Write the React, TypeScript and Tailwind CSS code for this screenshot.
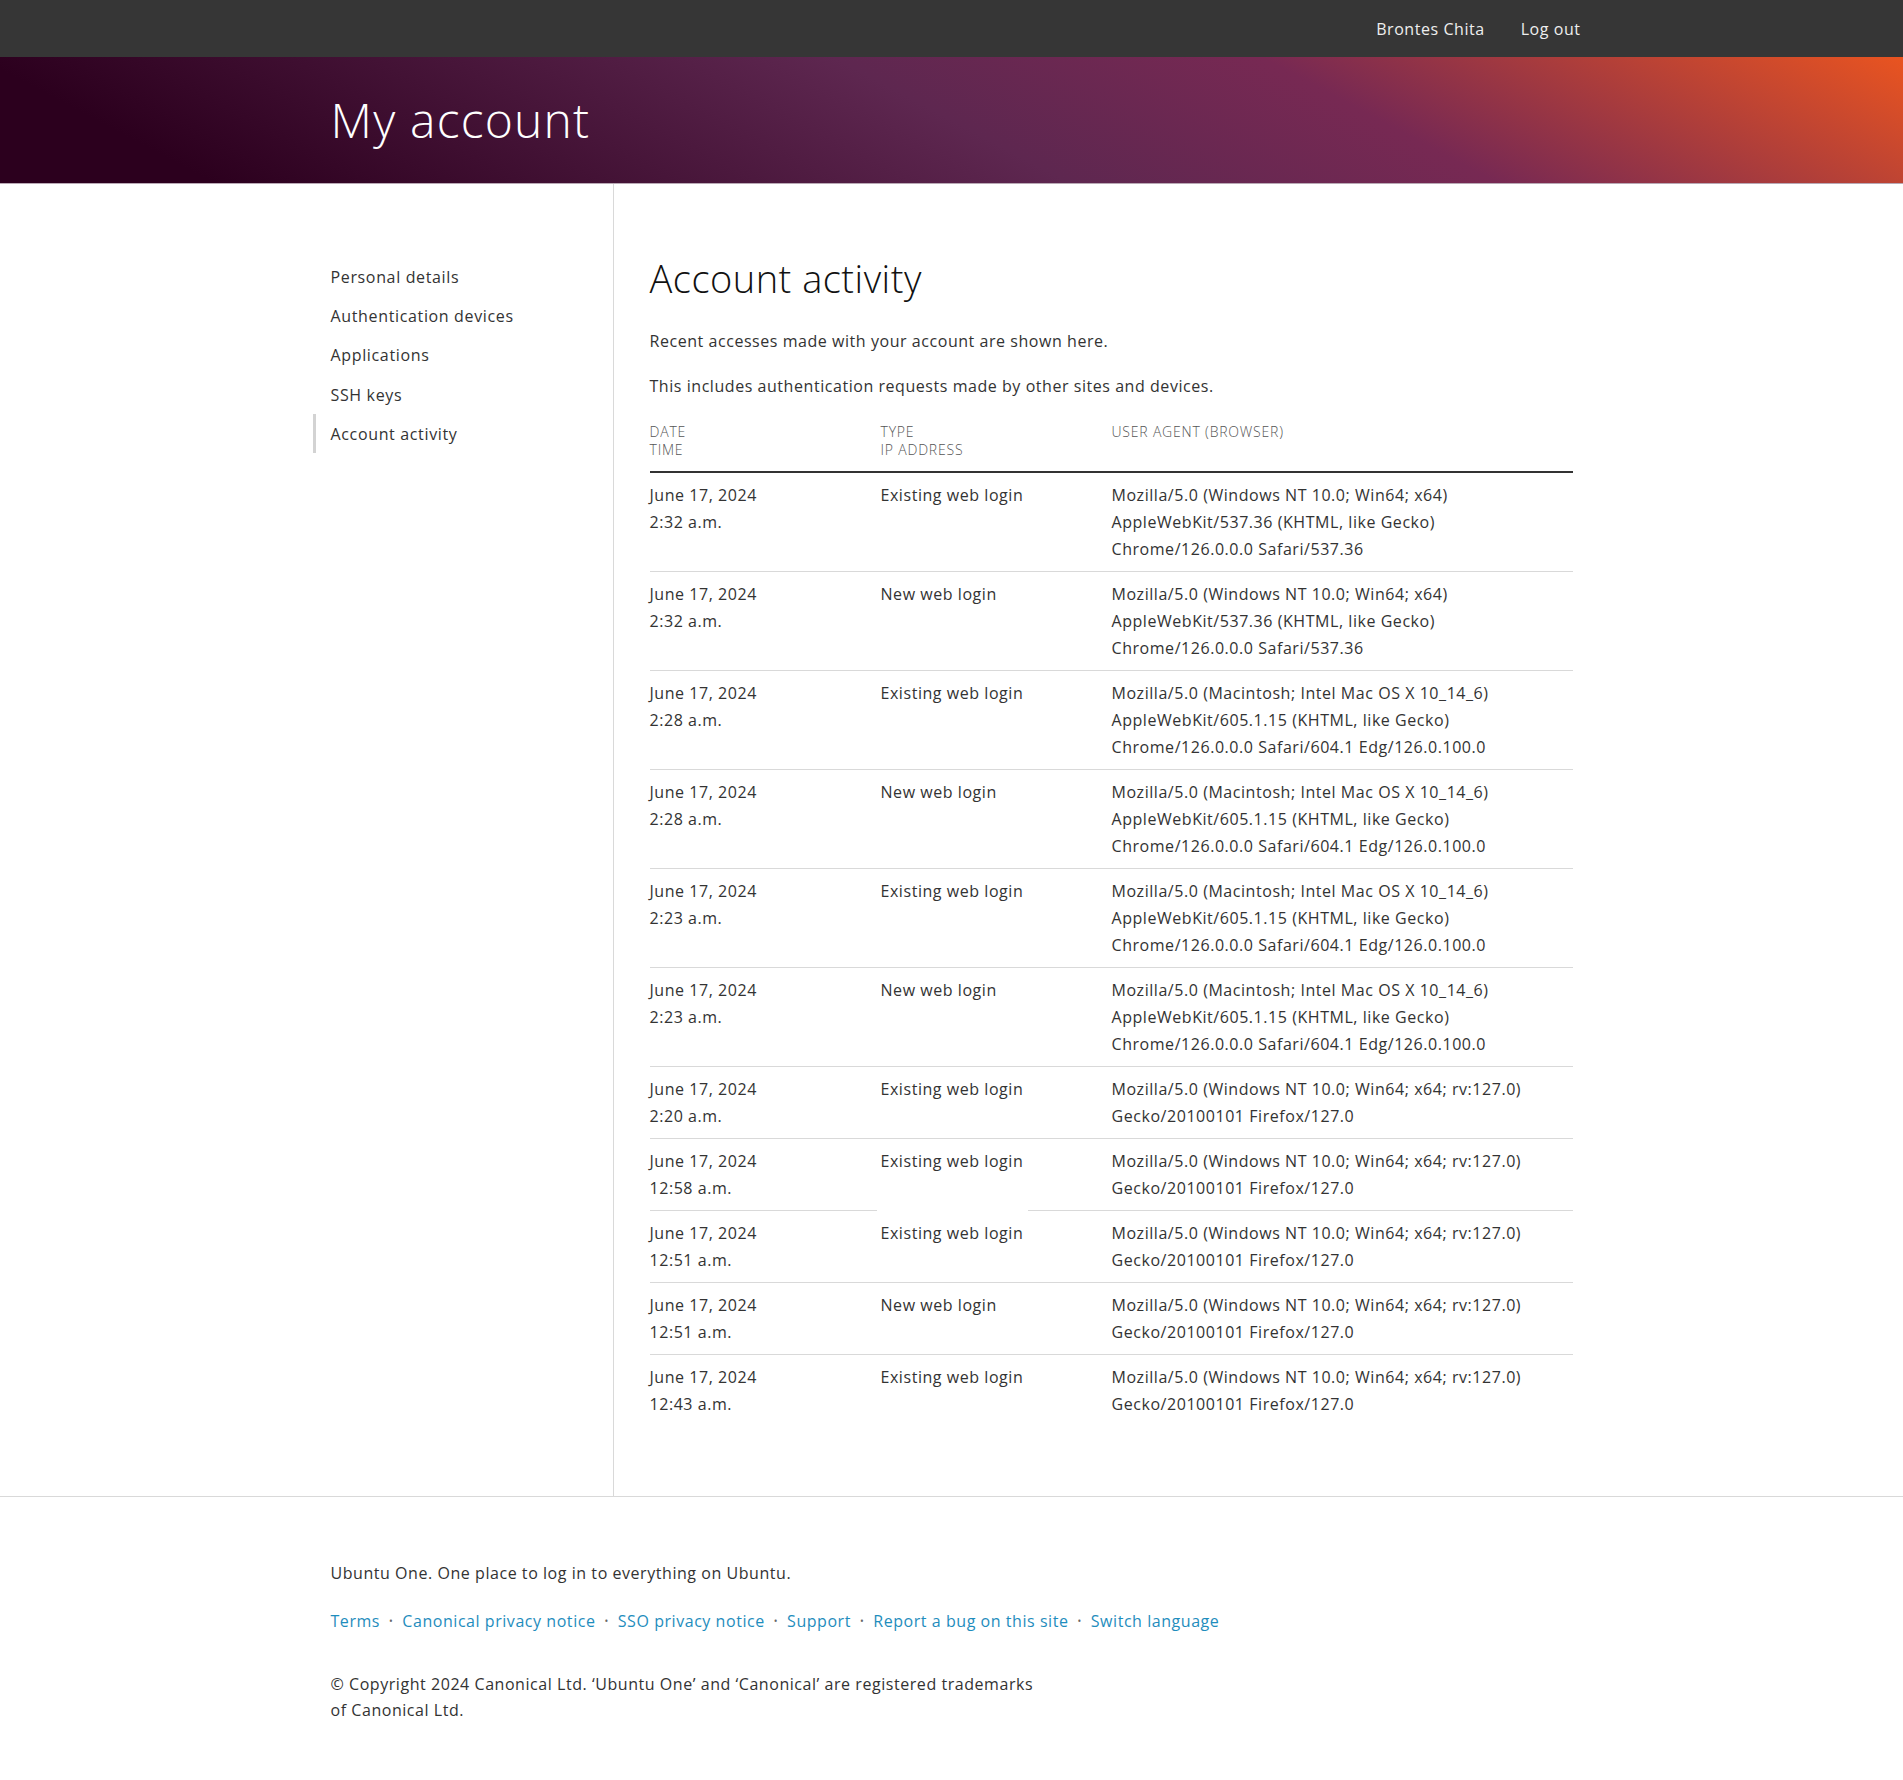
import { Fragment } from "react";

const navLinks = [
  "Personal details",
  "Authentication devices",
  "Applications",
  "SSH keys",
  "Account activity",
];

const winChrome = [
  "Mozilla/5.0 (Windows NT 10.0; Win64; x64)",
  "AppleWebKit/537.36 (KHTML, like Gecko)",
  "Chrome/126.0.0.0 Safari/537.36",
];

const macEdge = [
  "Mozilla/5.0 (Macintosh; Intel Mac OS X 10_14_6)",
  "AppleWebKit/605.1.15 (KHTML, like Gecko)",
  "Chrome/126.0.0.0 Safari/604.1 Edg/126.0.100.0",
];

const winFirefox = [
  "Mozilla/5.0 (Windows NT 10.0; Win64; x64; rv:127.0)",
  "Gecko/20100101 Firefox/127.0",
];

const activity = [
  { time: "2:32 a.m.", type: "Existing web login", agent: winChrome },
  { time: "2:32 a.m.", type: "New web login", agent: winChrome },
  { time: "2:28 a.m.", type: "Existing web login", agent: macEdge },
  { time: "2:28 a.m.", type: "New web login", agent: macEdge },
  { time: "2:23 a.m.", type: "Existing web login", agent: macEdge },
  { time: "2:23 a.m.", type: "New web login", agent: macEdge },
  { time: "2:20 a.m.", type: "Existing web login", agent: winFirefox },
  { time: "12:58 a.m.", type: "Existing web login", agent: winFirefox, gap: true },
  { time: "12:51 a.m.", type: "Existing web login", agent: winFirefox },
  { time: "12:51 a.m.", type: "New web login", agent: winFirefox },
  { time: "12:43 a.m.", type: "Existing web login", agent: winFirefox },
];

const footerLinks = [
  "Terms",
  "Canonical privacy notice",
  "SSO privacy notice",
  "Support",
  "Report a bug on this site",
  "Switch language",
];

export default function App() {
  return (
    <div className="min-h-[1780px] bg-white font-['Open_Sans','Noto_Sans',sans-serif] text-[16px] leading-[24px] tracking-[0.55px] text-[#333]">
      {/* TOP BAR */}
      <header className="h-[57px] bg-[#363636]">
        <div className="mx-auto flex h-full w-[1242px] items-center justify-end gap-[36px] text-[#eee]">
          <a href="#">Brontes Chita</a>
          <a href="#" className="-mr-[8px]">
            Log out
          </a>
        </div>
      </header>

      {/* HERO */}
      <div className="h-[127px] border-b border-[#b9a9b5] bg-[linear-gradient(28deg,#2c001e_0%,#2c001e_10%,#5e2750_50%,#772953_70%,#e95420_100%)]">
        <div className="mx-auto flex h-full w-[1242px] items-center">
          <h1 className="text-[48px] font-light leading-none tracking-[1.2px] text-white">My account</h1>
        </div>
      </div>

      {/* BODY */}
      <div className="border-b border-[#d9d9d9]">
        <div className="mx-auto flex w-[1242px]">
          <nav className="w-[282px] shrink-0 pt-[73px] tracking-[0.65px]">
            {navLinks.map((label) => {
              const active = label === "Account activity";
              return (
                <a
                  key={label}
                  href="#"
                  className={`flex h-[39.3px] items-center ${
                    active ? "-ml-[18px] border-l-[3px] border-[#d3d3d3] pl-[15px]" : ""
                  }`}
                >
                  {label}
                </a>
              );
            })}
          </nav>

          <main className="flex-1 border-l border-[#d9d9d9] pb-[70px] pl-[36px] pt-[70px]">
            <h2 className="text-[38px] font-light leading-[48px] tracking-[0.5px] text-[#111]">
              Account activity
            </h2>
            <p className="mt-[27px]">Recent accesses made with your account are shown here.</p>
            <p className="mt-[21px]">This includes authentication requests made by other sites and devices.</p>

            <div className="mt-[25px] grid grid-cols-[231px_231px_1fr] border-b-2 border-[#333] pb-[12px] text-[14px] font-light uppercase leading-[18px] tracking-[0.8px] text-[#555]">
              <div>
                Date
                <br />
                Time
              </div>
              <div>
                Type
                <br />
                IP address
              </div>
              <div>User agent (browser)</div>
            </div>

            {activity.map((row, i) => {
              const last = i === activity.length - 1;
              return (
                <Fragment key={i}>
                  <div
                    className={`grid grid-cols-[231px_231px_1fr] pb-[8px] pt-[9px] leading-[27px] ${
                      last || row.gap ? "" : "border-b border-[#d9d9d9]"
                    }`}
                  >
                    <div>
                      June 17, 2024
                      <br />
                      {row.time}
                    </div>
                    <div>{row.type}</div>
                    <div>
                      {row.agent.map((line) => (
                        <div key={line}>{line}</div>
                      ))}
                    </div>
                  </div>
                  {row.gap && (
                    <div className="flex h-px">
                      <div className="w-[227px] bg-[#d9d9d9]" />
                      <div className="w-[151px]" />
                      <div className="flex-1 bg-[#d9d9d9]" />
                    </div>
                  )}
                </Fragment>
              );
            })}
          </main>
        </div>
      </div>

      {/* FOOTER */}
      <footer className="mx-auto w-[1242px] pb-[56px] pt-[64px]">
        <p>Ubuntu One. One place to log in to everything on Ubuntu.</p>
        <div className="mt-[24px] flex items-center">
          {footerLinks.map((label, i) => (
            <Fragment key={label}>
              {i > 0 && <span className="mx-[9px] text-[10px] text-[#666]">•</span>}
              <a href="#" className="text-[#1f8dbd]">
                {label}
              </a>
            </Fragment>
          ))}
        </div>
        <p className="mt-[38px] leading-[26px]">
          © Copyright 2024 Canonical Ltd. ‘Ubuntu One’ and ‘Canonical’ are registered trademarks
          <br />
          of Canonical Ltd.
        </p>
      </footer>
    </div>
  );
}
